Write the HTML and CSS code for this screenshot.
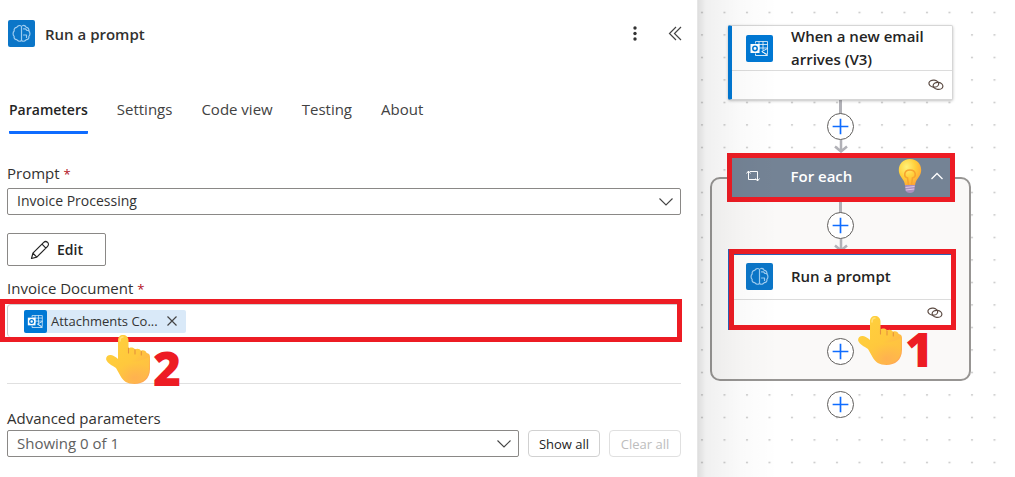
FILE: index.html
```html
<!DOCTYPE html>
<html lang="en">
<head>
<meta charset="utf-8">
<title>Run a prompt</title>
<link rel="stylesheet" href="styles.css">
</head>
<body>
<svg class="defs" aria-hidden="true">
  <defs>
    <linearGradient id="skin" x1="0" y1="0" x2="1" y2="1">
      <stop offset="0" stop-color="#ffd23c"/><stop offset="0.55" stop-color="#ffc83d"/><stop offset="1" stop-color="#ff9f5a"/>
    </linearGradient>
    <radialGradient id="palm" cx="0.55" cy="0.8" r="0.6">
      <stop offset="0" stop-color="#ffb052"/><stop offset="1" stop-color="#ffc83d"/>
    </radialGradient>
    <radialGradient id="glass" cx="0.35" cy="0.3" r="0.8">
      <stop offset="0" stop-color="#fff27a"/><stop offset="0.5" stop-color="#ffcf3a"/><stop offset="1" stop-color="#ff9e35"/>
    </radialGradient>
    <symbol id="brain" viewBox="0 0 27 27">
      <g fill="none" stroke="#9ccbf0" stroke-width="1.200" stroke-linecap="round" stroke-linejoin="round">
        <path d="M13.500 7v13.500c-1.500 1.300-4 .9-4.800-.9-2 0-3-1.700-2.500-3.200-1.500-1.200-1.500-4.200 0-5.400-.5-2 .9-3.700 2.600-3.700.8-2 3.400-2.400 4.700-.9"/>
        <path d="M13.500 20.500c1.500 1.300 4 .9 4.800-.9 2 0 3-1.700 2.500-3.200 1.500-1.200 1.500-4.200 0-5.400.5-2-.9-3.700-2.600-3.700-.8-1.500-2.400-2.100-3.700-1.600"/>
        <path d="M15.500 8.800h2l1.500 1.700h1.800M15.500 15h3v2.500"/>
      </g>
    </symbol>
    <symbol id="outlook" viewBox="0 0 27 27">
      <g fill="none" stroke="#fff" stroke-width="1">
        <path d="M9.500 8.500v-2h12v13l-6-3M13 6.500v9M17 6.500v9M9.500 9.500h12M9.500 13h12" opacity=".75"/>
        <path d="M9.500 18.500v2h12l-5.500-4 5.500-3" opacity=".85"/>
      </g>
      <rect x="4.500" y="9" width="9" height="9" fill="#fff"/>
      <circle cx="9" cy="13.500" r="2.200" fill="none" stroke="#0078d4" stroke-width="1.500"/>
    </symbol>
    <symbol id="plus" viewBox="0 0 27 27">
      <path d="M13.500 5v17M5 13.500h17" stroke="#0f6cff" stroke-width="1.800"/>
    </symbol>
    <symbol id="link" viewBox="0 0 16 12">
      <g fill="none" stroke="#5b4a42" stroke-width="1.200">
        <ellipse cx="5.800" cy="4.600" rx="4.900" ry="3.500" transform="rotate(8 5.800 4.600)"/>
        <ellipse cx="10" cy="6.900" rx="4.900" ry="3.500" transform="rotate(8 10 6.900)"/>
      </g>
    </symbol>
    <symbol id="chevron" viewBox="0 0 16 16">
      <path d="M1.500 4.500 8 11l6.500-6.500" fill="none" stroke="#444" stroke-width="1.100"/>
    </symbol>
    <symbol id="hand" viewBox="0 0 44 49">
      <path d="M12 24V5.500C12 2 14 0 17 0s5.500 2 5.500 5.500V14c1-2 5-2 6.500.5 2-1.500 5-.8 6 1.200 2.500-1.200 5 .2 5.700 2.300 2.300.2 3.300 1.800 3.300 4v12C44 44 37 49 28.500 49c-7 0-11.500-3-14-8L10 33C6 30.500 1.500 28 .3 25-.6 22 2 19.500 5 20c2.500.4 4.800 2 7 4z" fill="url(#skin)"/>
      <path d="M10 32c2-4 6-6 11-5 7 1 14-1 22-5v12c0 9-7 14-14.500 14-7 0-11.500-3-14-8z" fill="url(#palm)" opacity=".7"/>
      <path d="M22.500 13v5M29 14.500V19M35.300 16.500V20" fill="none" stroke="#e5923c" stroke-width="1.100" stroke-linecap="round"/>
      <path d="M14 6c0-2.500 1-4 3-4" fill="none" stroke="#ffe27a" stroke-width="1.500" stroke-linecap="round"/>
    </symbol>
  </defs>
</svg>
<div class="app">
  <main class="panel">
    <header class="panel-head">
      <svg class="tile brain-tile"><use href="#brain"/></svg>
      <h1 class="panel-title">Run a prompt</h1>
      <button class="icon-btn" aria-label="More commands">
        <svg width="20" height="20" viewBox="0 0 20 20" fill="#333"><circle cx="10" cy="4" r="1.700"/><circle cx="10" cy="9.500" r="1.700"/><circle cx="10" cy="15" r="1.700"/></svg>
      </button>
      <button class="icon-btn" aria-label="Collapse">
        <svg width="20" height="20" viewBox="0 0 20 20" fill="none" stroke="#444" stroke-width="1.200"><path d="M11 3 4.500 9.500 11 16M16 3 9.500 9.500 16 16"/></svg>
      </button>
    </header>
    <nav class="tabs" role="tablist">
      <button class="tab tab-active" role="tab" aria-selected="true">Parameters</button>
      <button class="tab" role="tab">Settings</button>
      <button class="tab" role="tab">Code view</button>
      <button class="tab" role="tab">Testing</button>
      <button class="tab" role="tab">About</button>
    </nav>
    <div class="form">
      <label class="label" for="prompt">Prompt <span class="req">*</span></label>
      <div class="select-wrap">
        <select class="select" id="prompt"><option>Invoice Processing</option></select>
        <svg class="chevron"><use href="#chevron"/></svg>
      </div>
      <button class="edit">
        <svg width="20" height="20" viewBox="0 0 20 20" fill="none" stroke="#242424" stroke-width="1.200" stroke-linejoin="round"><path d="M1.500 18.500l1.400-5.300L13.700 2.400a2.700 2.700 0 0 1 3.900 3.900L6.800 17.100zM12 4.200l3.900 3.900M2.900 13.200l3.900 3.900"/></svg>
        Edit
      </button>
      <label class="label" for="doc">Invoice Document <span class="req">*</span></label>
    </div>
    <div class="marked-field">
      <div class="token-field">
        <span class="token">
          <svg class="token-icon"><use href="#outlook"/></svg>
          <span class="token-text">Attachments Co...</span>
          <button class="token-close" aria-label="Remove"><svg width="12" height="12" viewBox="0 0 12 12" stroke="#444" stroke-width="1.200"><path d="M1.500 1.500l9 9M10.500 1.500l-9 9"/></svg></button>
        </span>
        <input class="token-input" id="doc" type="text">
      </div>
      <div class="callout callout-two"><svg class="hand"><use href="#hand"/></svg><span class="number">2</span></div>
    </div>
    <div class="advanced">
      <label class="label" for="advanced">Advanced parameters</label>
      <div class="advanced-row">
        <div class="select-wrap">
          <select class="select select-muted" id="advanced"><option>Showing 0 of 1</option></select>
          <svg class="chevron"><use href="#chevron"/></svg>
        </div>
        <button class="small-btn">Show all</button>
        <button class="small-btn" disabled>Clear all</button>
      </div>
    </div>
  </main>
  <section class="canvas" aria-label="Flow designer">
    <svg class="dots" aria-hidden="true">
      <defs><pattern id="grid" width="22.500" height="22.500" patternUnits="userSpaceOnUse"><rect x="3" y="12" width="2" height="1" fill="#adadad"/></pattern></defs>
      <rect width="100%" height="100%" fill="url(#grid)"/>
    </svg>
    <div class="flow">
      <article class="card trigger">
        <div class="card-head">
          <svg class="tile outlook-tile"><use href="#outlook"/></svg>
          <h2 class="card-title">When a new email arrives (V3)</h2>
        </div>
        <div class="card-foot"><svg class="link"><use href="#link"/></svg></div>
      </article>
      <div class="connector">
        <button class="add" aria-label="Insert step"><svg class="plus"><use href="#plus"/></svg></button>
        <svg class="arrow" viewBox="0 0 14 13"><path d="M7 0v11M1 6.500l6 5 6-5" fill="none" stroke="#b1b1b7" stroke-width="2.500"/></svg>
      </div>
      <div class="scope">
        <header class="loop">
          <svg class="loop-icon" viewBox="0 0 16 12" fill="none" stroke="#fff" stroke-width="1"><path d="M5 1.500h7.500V11M11 9.500H3.500V1M1.500 3.500l2-2.500 2 2.500M10.500 8.500l2 2.500 2-2.500"/></svg>
          <h2 class="loop-title">For each</h2>
          <svg class="bulb" viewBox="0 0 24 34">
            <path d="M12 0C5 0 .8 5 .8 11c0 5 3 7.500 5 11 .8 1.500 1 3 1.200 4.500h10c.2-1.500.4-3 1.200-4.500 2-3.500 5-6 5-11C23.200 5 19 0 12 0z" fill="url(#glass)"/>
            <path d="M10.500 26 9.500 19c-4-1-4-8 2.500-8s6.500 7 2.500 8l-1 7" fill="none" stroke="#f7a52f" stroke-width="1.600"/>
            <path d="M7 26h10l-.5 5c-.5 2-2 3-4.500 3s-4-1-4.500-3z" fill="#aa90bd"/>
            <path d="M7.500 28.500l9-1M7.700 31l8.500-1" stroke="#dfc9e7"/>
          </svg>
          <button class="collapse" aria-label="Collapse loop"><svg width="14" height="14" viewBox="0 0 14 14" fill="none" stroke="#fff" stroke-width="1.300"><path d="M1.500 10 7 4.500l5.500 5.500"/></svg></button>
        </header>
        <div class="connector connector-inner">
          <button class="add" aria-label="Insert step"><svg class="plus"><use href="#plus"/></svg></button>
          <svg class="arrow" viewBox="0 0 14 13"><path d="M7 0v11M1 6.500l6 5 6-5" fill="none" stroke="#b1b1b7" stroke-width="2.500"/></svg>
        </div>
        <article class="card marked">
          <div class="card-head">
            <svg class="tile brain-tile"><use href="#brain"/></svg>
            <h2 class="card-title">Run a prompt</h2>
          </div>
          <div class="card-foot"><svg class="link"><use href="#link"/></svg></div>
          <div class="callout callout-one"><svg class="hand"><use href="#hand"/></svg><span class="number">1</span></div>
        </article>
        <button class="add" aria-label="Insert step"><svg class="plus"><use href="#plus"/></svg></button>
      </div>
      <button class="add" aria-label="Insert step"><svg class="plus"><use href="#plus"/></svg></button>
    </div>
  </section>
</div>
</body>
</html>
```
FILE: styles.css
```css
* { box-sizing: border-box; }
body { margin: 0; background: #fff; color: #333; font-family: "Open Sans", "Noto Sans", sans-serif; font-size: 15px; line-height: 20px; }
button, select, input { font: inherit; color: inherit; margin: 0; }
button { padding: 0; border: 0; background: none; }
h1, h2 { margin: 0; font-weight: 600; font-size: 15px; }
svg { display: block; flex: none; }
.defs { position: absolute; width: 0; height: 0; }

.app { display: grid; grid-template-columns: 698fr 317fr; min-height: 100vh; }

.panel { position: relative; min-width: 0; background: #fff; border-right: 1px solid #e6e6e6; }
.panel-head { display: flex; align-items: center; gap: 20px; padding: 20px 12px 0 8px; }
.panel-title { flex: 1; margin-left: -10px; color: #323130; }
.tile { width: 27px; height: 27px; border-radius: 2px; }
.brain-tile { background: #0b76c8; }
.outlook-tile { background: #0078d4; }
.icon-btn { width: 20px; height: 20px; }

.tabs { display: flex; gap: 29px; padding: 51px 9px 0; }
.tab { padding-bottom: 10px; line-height: 23px; color: #424242; border-bottom: 3px solid transparent; }
.tab-active { font-size: 14px; font-weight: 600; color: #242424; border-color: #0f6cff; border-radius: 1px; }

.form { display: flex; flex-direction: column; padding: 29px 16px 0 7px; }
.label { display: block; color: #323130; }
.req { color: #b10e1c; font-size: 13px; line-height: 1; }
.select-wrap { display: grid; align-items: center; flex: 1; }
.form .select-wrap { margin-top: 5px; }
.select { grid-area: 1 / 1; width: 100%; height: 27px; padding: 0 36px 2px 9px; font-size: 14px; background: #fff; border: 1px solid #8a8886; border-radius: 2px; appearance: none; }
.select-muted { color: #616161; font-size: 15px; }
.chevron { grid-area: 1 / 1; justify-self: end; width: 16px; height: 16px; margin-right: 7px; pointer-events: none; }
.edit { display: flex; align-items: center; align-self: flex-start; justify-content: center; gap: 7px; width: 99px; height: 33px; margin: 18px 0 12px; color: #242424; font-weight: 600; font-size: 14px; border: 1px solid #8a8886; border-radius: 2px; }

.marked-field { position: relative; margin: 1px 15px 0 0; padding-left: 2px; border: 5px solid #ed1c24; }
.token-field { display: flex; align-items: center; height: 33px; padding-left: 16px; border-left: 1px solid #c8c8c8; border-top: 1px solid #d1d1d1; border-radius: 4px 0 0 4px; }
.token { display: flex; align-items: center; height: 23px; padding-right: 8px; background: #d9e9f8; border-radius: 2px; }
.token-icon { width: 23px; height: 23px; background: #0078d4; border-radius: 2px; }
.token-text { margin: 0 8px 0 4px; font-size: 13px; }
.token-close { width: 12px; height: 12px; }
.token-input { flex: 1; min-width: 0; border: 0; outline: 0; background: transparent; }

.callout { position: absolute; display: flex; gap: 3px; z-index: 2; pointer-events: none; }
.callout-two { left: 101px; top: 31px; }
.callout-one { left: 124px; top: 62px; }
.hand { width: 44px; height: 49px; }
.number { align-self: flex-end; margin-bottom: -2px; color: #ed1c24; font-weight: 800; font-size: 48px; line-height: 36px; }

.advanced { margin: 41px 16px 0 7px; padding-top: 24px; border-top: 1px solid #e0e0e0; }
.advanced-row { display: flex; gap: 9px; margin-top: 2px; }
.small-btn { width: 72px; height: 27px; color: #242424; font-size: 13px; border: 1px solid #d1d1d1; border-radius: 4px; }
.small-btn:disabled { color: #bdbdbd; border-color: #e0e0e0; }

.canvas { position: relative; overflow: hidden; }
.canvas::after { content: ""; position: absolute; inset: 0 auto 0 0; width: 80px; background: linear-gradient(90deg, rgba(0,0,0,.13), rgba(0,0,0,.06) 10%, rgba(0,0,0,.02) 55%, transparent); pointer-events: none; }
.dots { position: absolute; inset: 0; width: 100%; height: 100%; }
.flow { position: relative; display: flex; flex-direction: column; align-items: center; width: 261px; margin: 0 auto 0 12px; padding: 25px 0 0; }

.card { position: relative; width: 225px; background: #fff; }
.trigger { border: 1px solid #d6d6d6; border-left: 4px solid #0078d4; border-radius: 2px; box-shadow: 0 1px 3px rgba(0,0,0,.25); }
.card-head { display: flex; align-items: center; gap: 18px; height: 45px; padding-left: 14px; border-bottom: 1px solid #dcdcdc; }
.card-title { color: #242424; line-height: 23px; }
.card-foot { display: flex; align-items: center; justify-content: flex-end; height: 28px; padding-right: 8px; }
.link { width: 16px; height: 12px; }

.connector { display: flex; flex-direction: column; align-items: center; height: 53px; padding-top: 13px; background: linear-gradient(#b1b1b7, #b1b1b7) top center / 3px 14px no-repeat; }
.connector-inner { height: 47px; padding-top: 10px; }
.arrow { width: 14px; height: 13px; }
.add { width: 27px; height: 27px; flex: none; background: #fff; border: 1px solid #605e5c; border-radius: 50%; }
.plus { width: 25px; height: 25px; }

.scope { display: flex; flex-direction: column; align-items: center; width: 100%; margin: 24px 0 10px; padding-bottom: 14px; background: #faf9f8; border: 2px solid #979593; border-radius: 10px; }
.loop { display: flex; align-items: center; width: 228px; height: 49px; margin-top: -26px; padding: 0 6px 3px 13px; background: #748395; border: 5px solid #ed1c24; }
.loop-icon { width: 16px; height: 12px; }
.loop-title { flex: 1; margin-left: 30px; color: #fff; }
.bulb { width: 24px; height: 34px; margin-right: 8px; }
.collapse { width: 14px; height: 14px; }
.marked { width: 227px; margin: 0 0 8px 4px; border: 5px solid #ed1c24; box-shadow: inset 0 1px #2b62b5, -1px 0 #2b62b5; }
.marked .card-head { padding-left: 12px; height: 46px; }
.marked .card-foot { height: 25px; }
```
